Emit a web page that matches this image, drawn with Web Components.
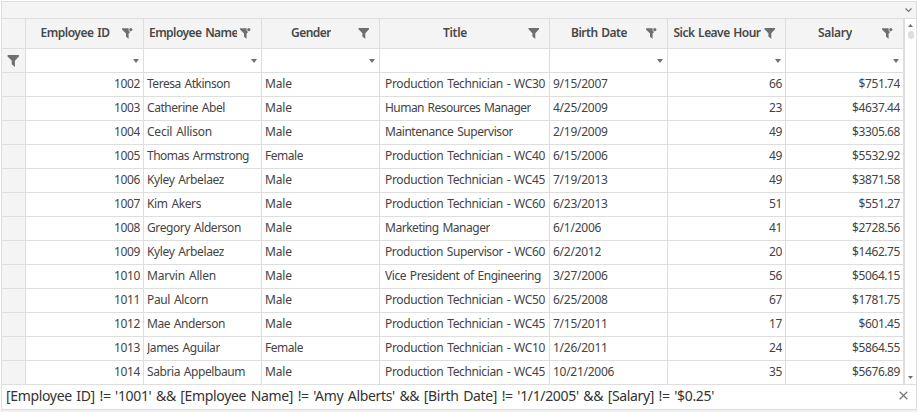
<!DOCTYPE html>
<html lang="en"><head><meta charset="utf-8"><title>Employees</title>
<style>html,body{margin:0;height:412px;overflow:hidden;background:#fff}</style></head>
<body><data-grid></data-grid>
<script>
class FitText extends HTMLElement{
  connectedCallback(){
    const r=this.attachShadow({mode:'open'});
    r.innerHTML='<style>:host{display:block;overflow:hidden;white-space:pre;flex:none;word-spacing:.09em}span{display:inline-block}</style><span><slot></slot></span>';
    const w=+this.getAttribute('w'),s=r.querySelector('span');
    if(w)s.style.letterSpacing=(w-s.getBoundingClientRect().width)/this.textContent.length+'px';
  }
}
customElements.define('fit-text',FitText);

class FilterIcon extends HTMLElement{
  connectedCallback(){
    const on=this.hasAttribute('active'),big=this.hasAttribute('big');
    this.attachShadow({mode:'open'}).innerHTML=`<style>:host{display:block;width:12px;height:13px;flex:none}svg{display:block;overflow:visible}</style>
    <svg width="${big?13:12}" height="${big?14:13}" viewBox="0 0 12 13" fill="#6f6f6f">${on?
    '<path d="M0 1.2H6.6V3.6L7.6 4.8H8.4L6.6 6.6V11.8L4 9.8V6.4L0 2.4Z"/><circle cx="8.8" cy="2.6" r="1.6"/>':
    '<path d="M.5 1H11V2.3L7.3 6.2V12L4.4 9.5V6.2L.5 2.3Z"/>'}</svg>`;
  }
}
customElements.define('filter-icon',FilterIcon);

class GridHeader extends HTMLElement{
  connectedCallback(){
    this.attachShadow({mode:'open'}).innerHTML=`<style>
    :host{display:flex;box-sizing:border-box;height:30px;align-items:center;background:#f4f4f4;border-right:1px solid #dedede;border-bottom:1px solid #dedede;font-weight:600;color:#484848;padding:0 9px 0 5px}
    div{flex:1;min-width:0;display:flex;justify-content:safe center;overflow:hidden;line-height:20px;margin-right:3px;padding-bottom:1px}
    </style><div><slot></slot></div><filter-icon ${this.hasAttribute('active')?'active':''}></filter-icon>`;
  }
}
customElements.define('grid-header',GridHeader);

class GridCell extends HTMLElement{
  connectedCallback(){
    this.attachShadow({mode:'open'}).innerHTML=`<style>
    :host{display:flex;box-sizing:border-box;height:24px;align-items:center;border-right:1px solid #dedede;border-bottom:1px solid #dedede;padding:0 3px 2px;line-height:21px;overflow:hidden;background:#fff}
    :host([right]){justify-content:flex-end}
    :host([inset]){padding-left:5px}
    :host([head]){background:#f4f4f4;padding:0 5px}
    :host([drop]){justify-content:flex-end;padding:0 4px 0 0}
    i{width:0;height:0;border:3.5px solid transparent;border-top:4px solid #707070;border-bottom:0}
    </style><slot></slot>${this.hasAttribute('drop')?'<i></i>':''}`;
  }
}
customElements.define('grid-cell',GridCell);

class ScrollRail extends HTMLElement{
  connectedCallback(){
    this.attachShadow({mode:'open'}).innerHTML=`<style>
    :host{display:flex;flex-direction:column;align-items:center;box-sizing:border-box;width:13px;height:366px;background:#fff;border-left:1px solid #dedede;border-right:1px solid #dedede;border-bottom:1px solid #dedede;padding:5px 0}
    b{width:6px;height:8px;border-radius:3px;background:#dedede;margin-top:4px}
    svg{display:block}svg:last-child{margin-top:auto}
    </style><svg width="5" height="3"><path d="M0 3L2.5 0L5 3" fill="#707070"/></svg><b></b><svg width="5" height="3"><path d="M0 0L2.5 3L5 0" fill="#707070"/></svg>`;
  }
}
customElements.define('scroll-rail',ScrollRail);

const heads=[['Employee ID',69,1],['Employee Name',89,1],['Gender',40,0],['Title',24,0],['Birth Date',56,1],['Sick Leave Hour',87,0],['Salary',34,1]];
const WC='Production Technician - WC';
const rows=[
['1002','Teresa Atkinson',83,'Male',WC+'30',160,'9/15/2007','66','$751.74'],
['1003','Catherine Abel',78,'Male','Human Resources Manager',146,'4/25/2009','23','$4637.44'],
['1004','Cecil Allison',65,'Male','Maintenance Supervisor',128,'2/19/2009','49','$3305.68'],
['1005','Thomas Armstrong',102,'Female',WC+'40',160,'6/15/2006','49','$5532.92'],
['1006','Kyley Arbelaez',77,'Male',WC+'45',160,'7/19/2013','49','$3871.58'],
['1007','Kim Akers',54,'Male',WC+'60',160,'6/23/2013','51','$551.27'],
['1008','Gregory Alderson',94,'Male','Marketing Manager',105,'6/1/2006','41','$2728.56'],
['1009','Kyley Arbelaez',77,'Male','Production Supervisor - WC60',160,'6/2/2012','20','$1462.75'],
['1010','Marvin Allen',69,'Male','Vice President of Engineering',156,'3/27/2006','56','$5064.15'],
['1011','Paul Alcorn',61,'Male',WC+'50',160,'6/25/2008','67','$1781.75'],
['1012','Mae Anderson',78,'Male',WC+'45',160,'7/15/2011','17','$601.45'],
['1013','James Aguilar',73,'Female',WC+'10',160,'1/26/2011','24','$5864.55'],
['1014','Sabria Appelbaum',98,'Male',WC+'45',160,'10/21/2006','35','$5676.89']];
const digits=t=>[...t].reduce((n,c)=>n+(c==='/'?4.67:c==='.'?2.6:6.47),0);
const fit=(t,w)=>`<fit-text w="${w}">${t}</fit-text>`;

class DataGrid extends HTMLElement{
  connectedCallback(){
    this.attachShadow({mode:'open'}).innerHTML=`<style>
    :host{display:flex;flex-direction:column;box-sizing:border-box;width:918px;height:412px;padding:1px 1px 0;font:12px "Noto Sans","Open Sans",sans-serif;color:#444;background:linear-gradient(#fff 410px,#f1f1f1 410px)}
    .group{box-sizing:border-box;width:916px;height:18px;background:#f4f4f4;border:1px solid #dedede;display:flex;justify-content:flex-end;align-items:center;padding-right:4px}
    .main{display:flex;height:366px}
    .grid{display:grid;grid-template-columns:24px 118px 118px 118px 170px 118px 118px 118px;grid-auto-rows:24px;grid-template-rows:30px 24px;box-sizing:border-box;width:903px;border-left:1px solid #dedede}
    .corner{background:#f4f4f4;border-right:1px solid #dedede;border-bottom:1px solid #dedede}
    .foot{box-sizing:border-box;width:916px;height:25px;border:1px solid #dedede;border-top:0;background:#fff;display:flex;justify-content:space-between;align-items:center;padding:0 8px 3px 4px;font-size:14px;line-height:21px;color:#333}
    svg{display:block}
    </style>
    <div class="group"><svg width="7" height="5"><path d="M.5.5L3.5 3.5L6.5.5" fill="none" stroke="#777" stroke-width="1.2"/></svg></div>
    <div class="main"><div class="grid"><div class="corner"></div>
    ${heads.map(h=>`<grid-header ${h[2]?'active':''}>${fit(h[0],h[1])}</grid-header>`).join('')}
    <grid-cell head><filter-icon big></filter-icon></grid-cell>
    ${heads.map((h,i)=>`<grid-cell ${i===3?'':'drop'}></grid-cell>`).join('')}
    ${rows.map(r=>`<grid-cell head></grid-cell><grid-cell right>${fit(r[0],26)}</grid-cell><grid-cell>${fit(r[1],r[2])}</grid-cell><grid-cell>${fit(r[3],r[3]==='Male'?27:38)}</grid-cell><grid-cell inset>${fit(r[4],r[5])}</grid-cell><grid-cell>${fit(r[6],digits(r[6]))}</grid-cell><grid-cell right>${fit(r[7],13)}</grid-cell><grid-cell right>${fit(r[8],digits(r[8]))}</grid-cell>`).join('')}
    </div><scroll-rail></scroll-rail></div>
    <div class="foot">${fit("[Employee ID] != '1001' &amp;&amp; [Employee Name] != 'Amy Alberts' &amp;&amp; [Birth Date] != '1/1/2005' &amp;&amp; [Salary] != '$0.25'",708)}<svg width="9" height="9"><path d="M.7.7L8.3 8.3M8.3.7L.7 8.3" stroke="#777" stroke-width="1.3"/></svg></div>`;
  }
}
customElements.define('data-grid',DataGrid);
</script></body></html>
